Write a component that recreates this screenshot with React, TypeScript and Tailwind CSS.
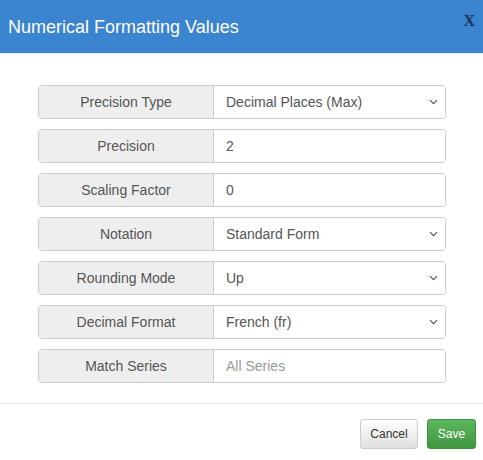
import React from "react";

type Field =
  | { label: string; kind: "select"; value: string }
  | { label: string; kind: "input"; value: string; placeholder?: boolean };

const fields: Field[] = [
  { label: "Precision Type", kind: "select", value: "Decimal Places (Max)" },
  { label: "Precision", kind: "input", value: "2" },
  { label: "Scaling Factor", kind: "input", value: "0" },
  { label: "Notation", kind: "select", value: "Standard Form" },
  { label: "Rounding Mode", kind: "select", value: "Up" },
  { label: "Decimal Format", kind: "select", value: "French (fr)" },
  { label: "Match Series", kind: "input", value: "All Series", placeholder: true },
];

const Chevron = () => (
  <svg width="9" height="6" viewBox="0 0 9 6" fill="none" aria-hidden="true">
    <path d="M1 1.2l3.5 3.5 3.5-3.5" stroke="#555" strokeWidth="1.2" />
  </svg>
);

export default function App() {
  return (
    <div
      className="w-[483px] h-[460px] bg-white flex flex-col"
      style={{ fontFamily: '"Liberation Sans", Arial, sans-serif' }}
    >
      {/* Header */}
      <div className="h-[54px] bg-[#3a84d0] flex items-center justify-between pl-[8px] pr-[8px] border-b border-[#e5e5e5] shrink-0">
        <span className="text-white text-[18px] leading-none pt-[1px]">Numerical Formatting Values</span>
        <span
          className="text-[#1b3550] text-[16px] font-bold leading-none -mt-[11px]"
          style={{ fontFamily: '"Liberation Serif", "Times New Roman", serif' }}
        >
          X
        </span>
      </div>

      {/* Body */}
      <div className="flex flex-col gap-[10px] pl-[38px] pr-[37px] pt-[31px] pb-[20px] border-b border-[#e5e5e5]">
        {fields.map((f) => (
          <div
            key={f.label}
            className="flex h-[34px] border border-[#cccccc] rounded-[4px] overflow-hidden text-[14px]"
          >
            <div className="w-[175px] shrink-0 bg-[#eeeeee] border-r border-[#cccccc] flex items-center justify-center text-[#555555]">
              {f.label}
            </div>
            <div className="flex-1 bg-white flex items-center justify-between pl-[12px] pr-[7px]">
              <span className={f.kind === "input" && f.placeholder ? "text-[#999999]" : "text-[#555555]"}>
                {f.value}
              </span>
              {f.kind === "select" && <Chevron />}
            </div>
          </div>
        ))}
      </div>

      {/* Footer */}
      <div className="flex justify-end gap-[9px] pt-[15px] pr-[7px]">
        <button className="h-[30px] w-[58px] rounded-[3px] border border-[#cccccc] bg-gradient-to-b from-white to-[#e0e0e0] text-[12px] text-[#333333]">
          Cancel
        </button>
        <button className="h-[30px] w-[49px] rounded-[3px] border border-[#3e8f3e] bg-gradient-to-b from-[#5cb85c] to-[#419641] text-[12px] text-white">
          Save
        </button>
      </div>
    </div>
  );
}
